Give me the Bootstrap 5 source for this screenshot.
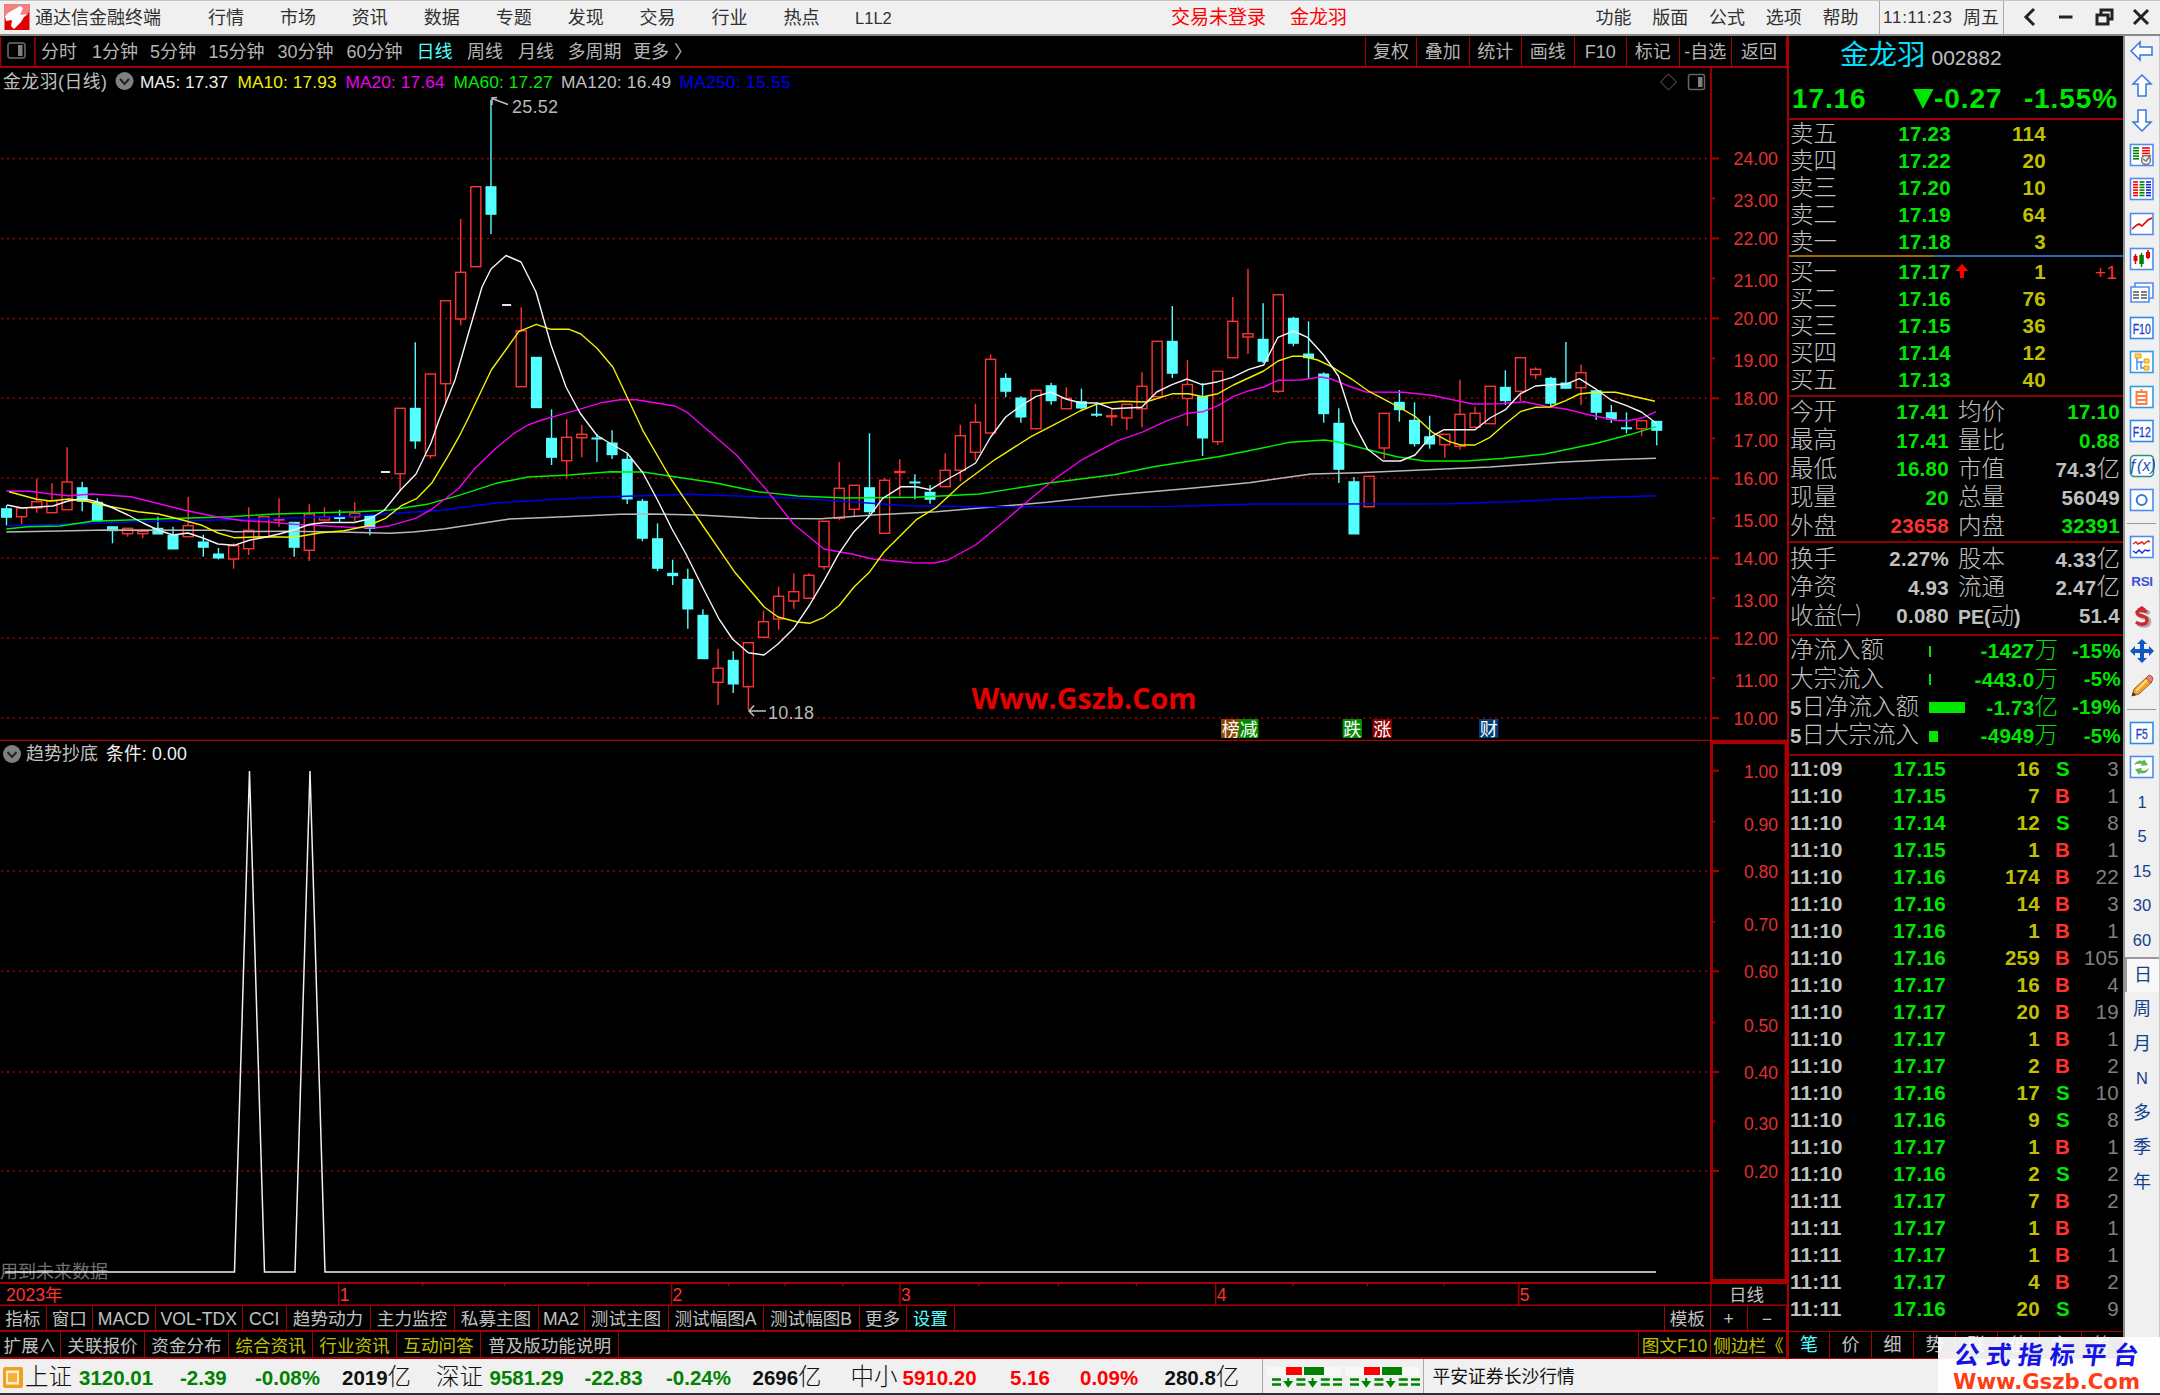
<!DOCTYPE html>
<html lang="zh-CN">
<head>
<meta charset="utf-8">
<meta name="viewport" content="width=device-width, initial-scale=1">
<title>通达信金融终端</title>
<link href="https://cdn.jsdelivr.net/npm/bootstrap@5.3.0/dist/css/bootstrap.min.css" rel="stylesheet">
<style>
:root{--ln:#a80000;--g:#00e600;--y:#c0c000;--r:#ff3232;--w:#c0c0c0;--c:#54ffff}
body{width:2160px;height:1395px;overflow:hidden;background:#000;color:var(--w);font-family:"Liberation Sans","Noto Sans CJK SC",sans-serif;font-size:18px;line-height:1;font-weight:400}
b{font-weight:700}
svg{display:block;flex:none}
svg text{font-family:"Liberation Sans","Noto Sans CJK SC",sans-serif}
.titlebar{height:36px;background:#f0f0f0;color:#303030;border-top:1px solid #c4c4c4;border-bottom:2px solid #8a8a8a}
.menu-cell{width:71.95px;text-align:center}
.menu-cell2{width:56.8px;text-align:center}
.vsep{width:1px;align-self:stretch;background:#a8a8a8}
.leftcol{width:1787px}
.toolrow{height:32px;border-bottom:2px solid var(--ln);color:#b4b4b4;padding-top:1px}
.strip>span,.strip-b>span{flex:none;white-space:nowrap;display:flex;align-items:center;height:100%}
.strip-b>span{border-right:1.5px solid var(--ln);justify-content:center}
.tabrow{height:26px;border-bottom:2px solid var(--ln);font-size:17.6px}
.tabrow2{height:27px;border-bottom:2px solid var(--ln);font-size:17.6px}
.tabrow span,.tabrow2 span{padding-top:4px}
.c-y{color:var(--y)}.c-g{color:var(--g)}.c-r{color:var(--r)}.c-c{color:var(--c)}.c-w{color:var(--w)}.c-d{color:#808080}
.quote{width:336px;border-left:2px solid var(--ln)}
.qhead{height:84px;border-bottom:2px solid var(--ln)}
.qname{color:#00e0ff;font-size:28.5px}
.qbig{font-size:28px;font-weight:700;letter-spacing:.9px;color:var(--g)}
.qr{display:grid;align-items:center;white-space:nowrap;font-size:20.5px;font-weight:700;letter-spacing:.3px;padding-left:1px}
.qr>span{min-width:0;text-align:right}
.qr .lab{text-align:left;overflow:visible}
.k{font-size:23.5px;font-weight:300;letter-spacing:0}
.lv{height:27px;grid-template-columns:86px 75px 95px 71px}
.st{height:28.6px;grid-template-columns:86px 73px 9px 62px 100px}
.fl{height:28.3px;grid-template-columns:139px 38px 91px 63px}
.tk{height:27px;grid-template-columns:86px 70px 94px 38px 41px}
.asks{height:135px;padding-top:1px}
.bids{height:138px;padding-top:2px}
.flowbar{height:11px;background:var(--g)}
.hr-r{border-top:2px solid #900000}
.mid{height:2px;background:linear-gradient(90deg,#a06a00 43.5%,#2a6aa8 43.5%)}
.side{width:37px;background:#f0f0f0;border-left:2px solid #909090;color:#123f8c;box-shadow:inset -1px 0 #c8c8c8;padding-right:1px}
.side-i{height:34.56px;flex:none;display:flex;align-items:center;justify-content:center;font-size:18px}
.side-i.on{background:#f8f8f8;border-left:2px solid #999;border-top:2px solid #999}
.side-l{height:12.5px;flex:none;display:flex;align-items:center}
.side-l::before{content:"";height:1px;width:29px;margin-left:2px;background:#999}
.status{height:36px;background:#f0f0f0;color:#111;border-bottom:2px solid #2b3138;font-size:20.5px;font-weight:700;padding-left:3px}
.status>span{padding-top:4px}
.s-g{color:#008200}.s-r{color:#f00}
.wm{right:0;bottom:2px;width:222px;height:56px;background:rgba(255,255,255,.93)}
</style>
<script src="https://cdn.jsdelivr.net/npm/bootstrap@5.3.0/dist/js/bootstrap.bundle.min.js"></script>
</head>
<body class="d-flex flex-column position-relative">

<header class="titlebar d-flex align-items-center flex-shrink-0">
  <svg width="35" height="32" viewBox="0 0 35 32"><rect x="4.500" y="2" width="25" height="26" fill="#e00000"/><path d="M4.500 2h25v8q-10 8-25 3z" fill="#f28080"/><path d="M20 4 8 11l-3 3 1 5 6-1-1 6 3 3 7-7 3-5 4-3-8 1 3-7z" fill="#fff"/></svg>
  <span style="width:155px">通达信金融终端</span>
  <nav class="d-flex" id="menuL"></nav>
  <span class="s-r ms-auto me-4" style="font-size:19px">交易未登录</span>
  <span class="s-r" style="font-size:19px;width:295px">金龙羽</span>
  <nav class="d-flex" id="menuR"></nav>
  <span class="vsep" style="margin-left:10px"></span>
  <span class="d-flex justify-content-between align-items-center" style="width:119px;padding-left:3px"><span style="font-size:17px;letter-spacing:.75px">11:11:23</span><span>周五</span></span>
  <span class="vsep mx-1"></span>
  <svg width="152" height="32" viewBox="2008 1 152 32" fill="none" stroke="#222" stroke-width="3"><path d="m2034 8-8 8 8 8M2059 16h13.500M2134 9l14 14M2148 9l-14 14"/><path d="M2097 14h11v9h-11zM2101 13V9h11v9h-4"/></svg>
</header>

<div class="d-flex flex-fill" style="min-height:0">
  <main class="leftcol d-flex flex-column flex-shrink-0">
    <div class="toolrow d-flex flex-shrink-0">
      <svg width="37" height="29" viewBox="0 37 37 29"><path d="M35 37v30M.5 37v30" stroke="#a80000" stroke-width="1.500"/><rect x="8" y="43" width="17" height="15" rx="2.500" fill="none" stroke="#555" stroke-width="2"/><rect x="18" y="45" width="4.500" height="11" fill="#808080"/></svg>
      <div class="strip d-flex ps-1" id="periods"></div>
      <div class="strip-b d-flex ms-auto" id="tools"></div>
    </div>
    <svg id="kchart" width="1787" height="673" viewBox="0 68 1787 673"></svg>
    <svg id="ichart" width="1787" height="541" viewBox="0 741 1787 541"></svg>
    <svg id="axis" width="1787" height="24" viewBox="0 1282 1787 24"></svg>
    <div class="tabrow d-flex flex-shrink-0"><div class="strip-b d-flex" id="tabs1"></div><div class="strip-b d-flex ms-auto" id="tabs1r"></div></div>
    <div class="tabrow2 d-flex flex-shrink-0"><div class="strip-b d-flex" id="tabs2"></div><div class="strip-b d-flex ms-auto c-y" id="tabs2r"></div></div>
  </main>

  <section class="quote d-flex flex-column flex-shrink-0">
    <div class="qhead flex-shrink-0">
      <div class="d-flex align-items-center" style="height:38px;padding-left:51px"><span class="qname">金龙羽</span><span class="mt-1" style="font-size:21px;padding-left:6px">002882</span></div>
      <div class="qbig d-flex justify-content-between align-items-center" style="height:44px;padding:6px 5px 0 3px"><span>17.16</span><span class="d-flex align-items-center" style="padding-left:25px"><svg width="21" height="20"><path d="M0 0h20.500L10 20z" fill="#00e600"/></svg>-0.27</span><span>-1.55%</span></div>
    </div>
    <div id="asks" class="asks"></div>
    <div class="mid"></div>
    <div id="bids" class="bids"></div>
    <div class="hr-r" id="st1" style="height:146px;padding-top:1px"></div>
    <div class="hr-r" id="st2" style="height:93px;padding-top:2px"></div>
    <div class="hr-r" id="flow" style="height:120px;padding-top:1px"></div>
    <div class="hr-r" id="ticks" style="height:577px"></div>
    <div class="strip-b d-flex border-top border-bottom flex-shrink-0" id="qtabs" style="height:28px;border-color:#a80000!important"></div>
  </section>

  <aside class="side d-flex flex-column flex-shrink-0" id="side"></aside>
</div>

<footer class="status strip d-flex align-items-center flex-shrink-0" id="status"></footer>

<div class="wm position-absolute">
  <svg width="222" height="56" viewBox="0 0 222 56"><g transform="translate(4 0) skewX(-8)"><text x="15" y="27" font-size="25" font-weight="700" fill="#1414e6" textLength="184">公式指标平台</text></g><text x="15" y="51.500" font-size="21" font-weight="700" fill="#ff3c14" textLength="187" lengthAdjust="spacingAndGlyphs" style="font-family:'DejaVu Sans'">Www.Gszb.Com</text></svg>
</div>

<script>
const $=id=>document.getElementById(id);
const cells=(id,rows)=>{$(id).innerHTML=rows.map(([t,w,c])=>`<span class="${c||''}" style="width:${w}px">${t}</span>`).join('')};

$('menuL').innerHTML=['行情','市场','资讯','数据','专题','发现','交易','行业','热点','<span style="font-size:16.500px">L1L2</span>'].map(t=>`<span class="menu-cell">${t}</span>`).join('');
$('menuR').innerHTML=['功能','版面','公式','选项','帮助'].map(t=>`<span class="menu-cell2">${t}</span>`).join('');

cells('periods',[['分时',51],['1分钟',58],['5分钟',58.500],['15分钟',69],['30分钟',69],['60分钟',70],['日线',50.500,'c-c'],['周线',51],['月线',49.500],['多周期',65.500],['更多 〉',60]]);
cells('tools',[['',5],['复权',51],['叠加',52.500],['统计',52.500],['画线',52.500],['F10',52.500],['标记',52.500],['-自选',52.500],['返回',55]]);
cells('tabs1',[['指标',46.500],['窗口',46.500],['MACD',62.500],['VOL-TDX',87.500],['CCI',43.500],['趋势动力',84],['主力监控',84],['私募主图',84],['MA2',46],['测试主图',84],['测试幅图A',95],['测试幅图B',96],['更多',47],['设置',48.500,'c-c']]);
cells('tabs1r',[['',2],['模板',45.500],['+',37.500],['−',39]]);
cells('tabs2',[['扩展∧',61],['关联报价',84],['资金分布',84],['综合资讯',84,'c-y'],['行业资讯',84,'c-y'],['互动问答',84,'c-y'],['普及版功能说明',138]]);
cells('tabs2r',[['',1],['图文F10',72],['侧边栏《',76]]);
cells('qtabs',[['笔',41,'c-c'],['价',42],['细',42],['势',42],['联',42],['值',42],['主',42],['筹',42]]);

/* order book */
const lv=([l,p,q,a,d])=>`<div class="qr lv"><span class="lab k">${l}</span><span class="c-g">${p}</span><span class="c-y">${a||''}${q}</span><span class="c-r" style="font-weight:400;font-size:19px">${d||''}</span></div>`;
$('asks').innerHTML=[['卖五','17.23',114],['卖四','17.22',20],['卖三','17.20',10],['卖二','17.19',64],['卖一','17.18',3]].map(lv).join('');
const up='<svg class="float-start" width="14" height="15" style="margin:2px 0 0 4px" viewBox="0 0 14 15"><path d="M7 0l6.500 7H9v7H5V7H.5z" fill="#f00"/></svg>';
$('bids').innerHTML=[['买一','17.17',1,up,'+1'],['买二','17.16',76],['买三','17.15',36],['买四','17.14',12],['买五','17.13',40]].map(lv).join('');
const st=([a,b,c,d,e,f])=>`<div class="qr st c-w"><span class="lab k">${a}</span><span class="${c}">${b}</span><i></i><span class="lab k">${d}</span><span class="${f}">${e}</span></div>`;
const yi='<span class="k">亿</span>',wan='<span class="k">万</span>';
$('st1').innerHTML=[['今开','17.41','c-g','均价','17.10','c-g'],['最高','17.41','c-g','量比','0.88','c-g'],['最低','16.80','c-g','市值','74.3'+yi,''],['现量','20','c-g','总量','56049',''],['外盘','23658','c-r','内盘','32391','c-g']].map(st).join('');
$('st2').innerHTML=[['换手','2.27%','','股本','4.33'+yi,''],['净资','4.93','','流通','2.47'+yi,''],['收益㈠','0.080','','<b style="font-size:19.500px">PE(</b>动<b style="font-size:19.500px">)</b>','51.4','']].map(st).join('');
$('flow').innerHTML=[['净流入额',2,'-1427'+wan,'-15%'],['大宗流入',2,'-443.0'+wan,'-5%'],['<b style="font-size:20.500px">5</b>日净流入额',36,'-1.73'+yi,'-19%'],['<b style="font-size:20.500px">5</b>日大宗流入',9,'-4949'+wan,'-5%']].map(([a,w,b,c])=>`<div class="qr fl c-g"><span class="lab k c-w">${a}</span><div class="flowbar" style="width:${w}px"></div><span>${b}</span><span>${c}</span></div>`).join('');
const T=`09 15 16 S 3|10 15 7 B 1|10 14 12 S 8|10 15 1 B 1|10 16 174 B 22|10 16 14 B 3|10 16 1 B 1|10 16 259 B 105|10 17 16 B 4|10 17 20 B 19|10 17 1 B 1|10 17 2 B 2|10 16 17 S 10|10 16 9 S 8|10 17 1 B 1|10 16 2 S 2|11 17 7 B 2|11 17 1 B 1|11 17 1 B 1|11 17 4 B 2|11 16 20 S 9`;
$('ticks').innerHTML=T.split('|').map(r=>{const[m,p,q,s,n]=r.split(' ');return `<div class="qr tk"><span class="lab c-w">11:${m}</span><span class="c-g">17.${p}</span><span class="c-y">${q}</span><span class="pe-2 ${s=='S'?'c-g':'c-r'}">${s}</span><span class="c-d" style="font-weight:400">${n}</span></div>`}).join('');

/* status bar */
const sk=t=>`<span class="k">${t}</span>`;
cells('status',[['<svg width="20" height="22" viewBox="0 0 20 22"><rect width="20" height="21" rx="2" fill="#f0a020"/><rect x="3" y="3.500" width="13" height="14" fill="#fff0c0"/><rect x="5" y="6" width="9" height="9" fill="#f5b040"/></svg>',22],
[sk('上证'),54],['3120.01',101,'s-g'],['-2.39',75,'s-g'],['-0.08%',87,'s-g'],['2019'+yi,94],[sk('深证'),53.500],['9581.29',95,'s-g'],['-22.83',81.500,'s-g'],['-0.24%',86.500,'s-g'],['2696'+yi,98],[sk('中小'),52],['5910.20',107.500,'s-r'],['5.16',70,'s-r'],['0.09%',84.500,'s-r'],['280.8'+yi,97]]);
const meter=x=>`<rect x="${x}" y="5" width="74" height="9" fill="#f8f8f8"/><rect x="${x+19}" y="5" width="16" height="8" fill="#f00"/><rect x="${x+37}" y="5" width="20" height="8" fill="#008200"/>`+[0,1,2,3,4,5].map(i=>{const a=x+5+i*12.2;return i==1||i==3?`<path d="M${a+4} 16v7M${a+1} 20l3 4 3-4z" stroke="#008200" stroke-width="2" fill="#008200"/>`:`<path d="M${a} 17.500h9M${a} 22.500h9" stroke="#008200" stroke-width="2.500"/>`}).join('');
$('status').insertAdjacentHTML('beforeend',`<i class="vsep"></i><svg width="160" height="30" viewBox="0 -1 160 30">${meter(4)}${meter(82)}</svg><i class="vsep"></i><span style="font-size:17.800px;font-weight:400;padding-left:9px">平安证券长沙行情</span>`);

/* sidebar */
const box=(c,s='#4f8cf0')=>`<svg width="26" height="24" viewBox="0 0 26 24"><rect x="1.500" y="1.500" width="22.500" height="21" fill="#fff" stroke="${s}" stroke-width="1.600"/>${c}</svg>`;
const bt=t=>box(`<text x="12.700" y="17.500" font-size="14" text-anchor="middle" fill="#2040c8" stroke="#2040c8" stroke-width=".3" textLength="${t.length*6}" lengthAdjust="spacingAndGlyphs">${t}</text>`,'#2f8ce8');
const arr=a=>`<svg width="26" height="26" viewBox="-13 -13 26 26"><path transform="rotate(${a})" d="M-11 0-2-9v5h12v8H-2v5z" fill="#fff" stroke="#3b74dc" stroke-width="1.500"/></svg>`;
const bars=(x,c,n=6,w=5)=>Array.from({length:n},(_,i)=>`<path d="M${x} ${5+i*2.7}h${w}" stroke="${c}" stroke-width="1.600"/>`).join('');
const icons=[arr(0),arr(90),arr(-90),
box(bars(4,'#008000',5,6)+bars(13,'#f00',4,8)+'<circle cx="17" cy="17" r="4.500" fill="#eee" stroke="#777" stroke-width="1.500"/><path d="m14 16 3 2 5-6" fill="none" stroke="#777" stroke-width="1.500"/>'),
box(bars(4,'#f00')+bars(10.5,'#008000')+bars(17,'#22d')),
box('<path d="m3 17 5-4 2-1 3 2 6-6 4-2" fill="none" stroke="#e00000" stroke-width="1.600"/>'),
box('<path d="M6.500 7v10M19 3v9" stroke="#e00000" stroke-width="1.500"/><path d="M4.500 9h4v5h-4zM17 5h4v6h-4z" fill="#e00000"/><path d="M12.500 6v14" stroke="#008000" stroke-width="1.500"/><path d="M10.300 8h4.500v9h-4.500z" fill="#008000"/>'),
'<svg width="26" height="24" viewBox="0 0 26 24" fill="#fff" stroke="#4f8cf0" stroke-width="1.600"><path d="M6 2h18v15H6z"/><path d="M2 6h18v15H2z"/><path d="M4 11h6M12 11h6M4 14h6M12 14h6M4 17h6M12 17h6" stroke="#555" stroke-width="1.400"/></svg>',
bt('F10'),
box('<path d="M8 7v13M8 12h6M12 12v6h3" fill="none" stroke="#4f8cf0" stroke-width="1.500"/><path d="M6 4h6v4H6zM15 9h5v4h-5zM15 16h5v4h-5z" fill="#ffd060" stroke="#f0a000"/>','#2f9ce8'),
box('<path d="M12.500 4v3M7.500 7h10v12h-10zM7.500 11h10M7.500 15h10" fill="none" stroke="#ff7f3f" stroke-width="2"/>','#2f9ce8'),
bt('F12'),
'<svg width="26" height="24" viewBox="0 0 26 24"><rect x="1.500" y="1.500" width="23" height="21" rx="4" fill="#fff" stroke="#28908c" stroke-width="1.600"/><text x="13" y="17" font-size="16" font-style="italic" text-anchor="middle" fill="#1c50c0">ƒ(x)</text></svg>',
box('<circle cx="12.700" cy="12" r="5" fill="none" stroke="#2f7ce0" stroke-width="2"/>'),
0,
box('<path d="m4 9 3-2 2 2 4-2 2 2 4-3 2 1" fill="none" stroke="#e02020" stroke-width="1.500"/><path d="m4 16 3 2 3-3 3 3 3-3 3 1 2-1" fill="none" stroke="#2030e0" stroke-width="1.500"/>'),
'<b style="font-size:13.500px;color:#3a50d8;letter-spacing:-.3px">RSI</b>',
'<svg width="26" height="26" viewBox="0 0 26 26"><path d="M19 8q-7-5-10 0 0 4 6 4 6 2 3 7-5 3-11-1" fill="none" stroke="#aaa" stroke-width="4" transform="translate(1.500 1.500)"/><path d="M18 8q-7-4-10 0 0 4 6 4 6 2 3 7-5 3-10-1" fill="none" stroke="#d02828" stroke-width="3.400"/><path d="m8 5 5-3 4 3z" fill="#d02828"/></svg>',
'<svg width="26" height="26" viewBox="-13 -13 26 26" fill="#1058c0"><g id="ar"><path d="M0-12 5-7H-5z"/><path d="M-2-8h4v6h-4z"/></g><use href="#ar" transform="rotate(90)"/><use href="#ar" transform="rotate(180)"/><use href="#ar" transform="rotate(270)"/><circle r="3"/></svg>',
'<svg width="26" height="26" viewBox="0 0 26 26"><path d="M3 23l2-7L18 4l5 5L10 21z" fill="#f0a030" stroke="#9a6420"/><path d="m7 18 11-11" stroke="#ffe070" stroke-width="2"/><path d="m17 5 3-3q4 1 4 4l-2 4z" fill="#e88080" stroke="#a05050"/><path d="m3 23 1-4 3 3z" fill="#333"/></svg>',
0,bt('F5'),
box('<path d="M5 10q3-6 9-4l1-2 4 6-7 1 1-2q-4-1-8 1zM20 13q-2 7-9 5l-1 2-4-6 7-1-1 2q4 2 8-2z" fill="#5cb85c"/>')];
$('side').innerHTML=icons.map(i=>i?`<div class="side-i">${i}</div>`:'<div class="side-l"></div>').join('')+['1','5','15','30','60','日','周','月','N','多','季','年'].map(t=>`<div class="side-i ${t=='日'?'on':''}" style="font-size:${/[\dN]/.test(t)?16.5:18}px">${t}</div>`).join('');
$('side').firstChild.style.marginTop='-2px';

/* candles: u|d, body top, body bottom, high, low */
const K=`d508.7,517.3,505,525.7 u508,516.7,508,524 u501.7,508,478.7,512.7 u500.7,512.7,483.3,512.7 u482,509.7,447.3,509.7 d487.7,501.3,481.7,511.3 d502.3,520.7,498.3,520.7 d526.7,530.7,526.7,543.3 u528.3,533.7,528.3,536.7 u531.3,533.7,531.3,538 d528.3,534,516.7,534 d535.3,549,526.7,549 u525.7,536.7,496.7,536.7 d542,547.3,534.7,556.7 d554,558,548,559.3 u545.7,559,543.3,568.7 u530.3,548.7,507.3,555 u516.7,537.3,516.7,537.3 u519,520,498.3,526.7 d522.3,547.3,522.3,556.7 u514,550.3,504.3,561 u517,520,507.3,520 d517.5,518.5,510,522.7 u513.3,516.7,502.3,520.7 d515.7,528.3,515.7,535.3 x472 u408.3,473.7,408.3,490.7 d408.3,441,342.3,448.7 u374,455.7,374,458.7 u300.7,383.7,300.7,405 u272.3,319,219,325.3 u186.7,266.7,186.7,266.7 d186.7,214.3,100,234 x305 u330.7,386.7,307.3,386.7 d357.3,407.7,357.3,407.7 d438.3,457.3,409.3,465 u437.3,460.7,419,478 u434.3,437.7,424.7,457.3 d438,439,434,462 d443,454.7,430.3,459 d459.3,499,453.7,504 d501.3,538.3,499,541.3 d538.7,568.3,523.3,571.3 d573.3,575.7,559.7,585 d579.3,609,568.7,628.7 d615.3,658.7,609.3,658.7 u668.3,682.3,648.7,705 d660.3,684,651.3,693 u642.7,686.7,642.7,710 u621.7,637.3,610.7,637.3 u596.3,619,586.7,629.7 u591.7,601,573.3,608.7 u575.3,598.3,573.3,598.3 u521.3,566.7,521.3,569.7 u488.3,518.3,462,520.3 u485.3,509.3,485.3,516.7 d487.7,511.7,433.3,514 u480.3,533.3,478,533.3 u471.5,472.5,459.3,496.7 d482,483,474.3,499.3 d492.3,499.3,485,503.7 u470.3,486.7,453.3,486.7 u435.7,470.3,424.7,481.3 u422.3,452.3,403.7,460.3 u359.3,433,354.3,433 d378.3,391.3,373.3,397.3 d398,417,396.3,422.7 u390.3,428.7,390.3,428.7 d385.7,400.7,382.7,404.7 u398.3,408.7,387.3,408.7 d401.7,408,388.7,409.3 d414.2,415.2,403.3,417 u415.8,416.8,409,426 u404.3,418,404.3,430 u386.3,408.7,372.3,427.3 u341.3,396.7,341.3,396.7 d341.3,373.3,306,378 u384.5,398.5,360,426 d396.7,438,383,456 u371.3,441.7,371.3,445 u321.3,357.7,297,357.7 u333.7,337,268.7,354 d339.3,361.3,303.3,363.3 u294.7,391.3,294.7,393 d318.3,343.3,316.7,346.3 d354,357.7,321.3,378.7 d374,413.7,372.3,422.7 d423.3,469.3,408.3,483 d481.7,534,477,534 u476.3,506.7,476.3,506.7 u413.3,448,413.3,459 d402.3,409.7,390,421.7 d420.3,443.7,402.3,446.7 d436.7,444,415.7,448.7 u434.3,444.7,434.3,457.7 u414.3,446.3,379.7,449.7 u413.3,427.3,406.7,427.3 u386.3,423.7,386.3,423.7 d387.3,400.7,370.3,405 u357.7,391.3,357.7,401 u369.3,374.7,367.3,379.3 d378.3,403.3,376.7,407.3 d383,388.3,342,388.3 u372.7,387.7,364.7,405 d390.7,412.3,390.7,420 d412.7,419,405,423 d427.8,428.8,412.3,433.3 u420.7,428.7,420.7,436.3 d421.3,430.3,421.3,445.3`;
let s='';
const dots=y=>`<path d="M1 ${y}H1708" stroke="#a00000" stroke-width="1.500" stroke-dasharray="2 4"/>`;
const txt=(x,y,t,c,e='')=>`<text x="${x}" y="${y}" fill="${c}" ${e}>${t}</text>`;
const red='#a80000';
for(let p=24;p>=10;p--){const y=158.5+(24-p)*39.97;const ev=p%2==0;if(ev)s+=dots(y);
  s+=`<path d="M1711 ${y}h${ev?8:4}" stroke="${red}" stroke-width="2"/>`+txt(1778,y+6.8+(ev?0:2),p+'.00','#e03030','font-size="17.800" text-anchor="end"');}
K.split(' ').forEach((k,i)=>{const x=6.5+15.14*i;
  if(k[0]=='x'){s+=`<path d="M${x-4} ${k.slice(1)}h9" stroke="#e8e8e8" stroke-width="2"/>`;return}
  const[a,b,h,l]=k.slice(1).split(',').map(Number);
  if(k[0]=='d')s+=`<path d="M${x} ${h}V${l}" stroke="#54ffff" stroke-width="1.400"/><rect x="${x-5.5}" y="${a-.5}" width="11" height="${b-a+1}" fill="#54ffff"/>`;
  else{s+=`<path d="M${x} ${h}V${a}M${x} ${b}V${l}" stroke="#ff3232" stroke-width="1.400"/><rect x="${x-5}" y="${a}" width="10" height="${b-a}" fill="none" stroke="#ff3232" stroke-width="1.400"/>`}});
const line=(c,p)=>{s+=`<polyline points="${p}" fill="none" stroke="${c}" stroke-width="1.400" stroke-linejoin="round"/>`};
line('#b8b8b8','6.4,532 60,531 105.6,530 225,530.3 234,531.7 284.7,531.3 340,532 390,533.3 413,532 445,528.7 509.6,519 564.7,516.7 620,514.3 650,514 698.9,515 758,518.3 821,518.7 876.8,514.7 936,511.7 995.4,506.7 1047,502.3 1114,495 1193.8,488 1249,482.7 1311,474 1359,472.7 1421,470 1490,467 1558.8,462.3 1610,459.7 1656,458.3');
line('#0000f0','6.4,525.7 73.5,524 137.7,521.7 216,520 294,518 353.5,516 399.5,513 440.8,510.3 496,503 555.6,499.3 610.7,496.7 688.7,494.3 738,496 797.7,498.3 857,502.3 908,505.7 995.4,506.7 1177,506.3 1255.8,504 1448.6,503.7 1510.6,501.7 1586,498 1656,495.7');
line('#00f000','6.4,529 27.5,526.7 60,526 92,521.3 165,518.7 230,516.7 275,514 358,511.7 390,510 427,504.3 459,495.3 496,483.3 528,477 569,475 610.7,471.7 643,472 671,476.3 714.7,482.7 758,491.7 797.7,496 845,498 916,497.3 979.6,494 1047,483.3 1114,474.7 1153.6,466.7 1218,456.7 1249,450.7 1290,442.3 1324.6,440 1338,442 1369.4,450 1397,456.7 1424.5,461 1466,461 1504,458.3 1545,454 1596.7,443.3 1631,434.3 1656,426.7');
line('#f000f0','6.4,491 30,491.3 50.5,494 69,495.7 92,494 131,496.7 156,503 183.7,510 216,516.7 243,520.7 266,521.7 294,524.3 349,527.3 376.5,527.7 390,525.7 415.5,518.3 431.6,509.3 459,488.3 475,468.3 496,448.3 514,433.3 528,425 541.8,420 578.5,409.7 601.5,402.7 620,399.7 636,399.7 675,406 687,412.3 736.4,455 766,489.3 793.8,524.3 824,549 853,554.3 872.8,559 912.4,562.7 934,563 948,560 975.6,545 1007.3,518.7 1027,501.7 1054.7,479 1080.4,460.7 1118,440.7 1141.7,432.3 1165.4,421.3 1187,413.3 1203,411.7 1218,405.7 1233,396.7 1249,390.7 1263.7,387 1278,380.3 1300.5,380 1321,377 1331.5,379 1348.7,386 1366,392 1403.8,392.3 1431.4,395.3 1472.7,404 1500,403.7 1524.4,401.7 1548.5,406.7 1565.7,409 1586.3,414.3 1615.6,420.3 1627.7,420.7 1643,417.7 1656,411.7');
line('#f0f000','9,491.7 36.7,499.3 50.5,501 69,499 87,501.3 101,504.7 137.7,511.7 158.4,514 183.7,520.3 202,525.3 218,533 234,537.7 266,536.7 294,537.3 321,532.7 344,530.7 367,526 385,518.7 402,505.3 417,498.3 431.6,483.3 447.7,456.7 459,436.7 467.4,420 491.3,370 518.8,331.7 536.3,324.3 551,329.3 569.3,329.3 580.8,334 597,348.3 613,367.3 627.7,398.3 643.5,431.7 671,479 698.9,520 734.4,571.7 764,606.7 778,617 797.7,622 809.6,623.3 824,617.3 839,605.7 854,587 869.3,572.3 884,552 916.3,519.7 936,507.7 960.6,485 995.4,459.3 1031,436.7 1054.7,424.3 1080,411 1098,403.7 1122,401.3 1145.7,402 1173,393.7 1189,393.7 1203,396.7 1218,393.7 1233.4,385 1263.7,371 1278,361 1292,356.3 1302,356.3 1317.7,360 1331.5,366.7 1352,379.3 1369.4,391.7 1386.6,400.7 1400.4,408 1415,416.3 1432.4,432.3 1448.6,441.3 1460.6,445 1475,445 1490,437.3 1505.4,423.7 1521,411.3 1535.4,407.3 1550,407 1565.7,400.7 1579.4,394 1595,392.3 1615.6,392.3 1655,401.3');
line('#f4f4f4','7,505 22,508 53,506 68,501 83,498.5 98,502 113,508 128,515 143,523 158,530 173,535 188,533 203,538 218,544 234,545.3 250,540 264,537.5 279,534 294,530 309,524.5 324,522.5 354,522.5 369,519 384,510.5 401,489.5 416,474 431,443 439,420 455,380 470,328 482,287 491,269 506,255.5 521,262 536,292 551,345 566,387 580,413 597,435.5 613,445 627,453 643,473 658,501 672,529 686,554 702,586 718.6,618.3 732.5,639 748.3,652.7 764,655 778,644 793.8,628.3 809.6,605 824,580.7 838.4,554.3 853.5,532.3 869.3,516.3 882.7,498.3 901.3,486.7 916.3,486.7 930.2,489.7 946,480 960.6,472 975.6,463 990.7,437 1005.7,417 1020.7,406 1035.7,396.7 1050.8,392 1066.6,399.3 1080.4,402.7 1097.4,403 1112,408.7 1141.7,407.3 1156.7,392 1172,384.7 1187,379 1202,384.7 1217.9,381.7 1232.3,377.3 1248.9,369.3 1263.7,365 1278,337.3 1293.6,331 1308,337.7 1323.6,355 1338.4,376 1352.9,421.7 1367.7,449.3 1383,461 1400.4,461 1415,455 1429.7,437.7 1444,429.7 1475,429.7 1490,418 1505.4,409.7 1520,394 1535.4,386 1550,384.7 1565.7,384.3 1579.4,378.7 1596.7,389.7 1611,400 1626.6,405.7 1641.4,412 1656,423');
const tl=(w)=>`font-size="17.300" textLength="${w}"`;
const chev=(x,y)=>`<circle cx="${x}" cy="${y}" r="9" fill="#808080"/><path d="m${x-4.5} ${y-2} 4.500 5 4.500-5" fill="none" stroke="#222" stroke-width="2"/>`;
s+=txt(3,87.5,'金龙羽(日线)','#c0c0c0','font-size="17.800" textLength="104"')+chev(124.5,81)
 +txt(140,87.5,'MA5: 17.37','#f0f0f0',tl(88))+txt(237.5,87.5,'MA10: 17.93','#f0f000',tl(99))+txt(345.5,87.5,'MA20: 17.64','#f000f0',tl(99))+txt(453.5,87.5,'MA60: 17.27','#00f000',tl(99))+txt(561,87.5,'MA120: 16.49','#c0c0c0',tl(110))+txt(679.5,87.5,'MA250: 15.55','#0000f0',tl(111));
s+=`<path d="M1668.500 74l8 8-8 8-8-8z" fill="none" stroke="#666"/><rect x="1688.500" y="74.500" width="16" height="15" rx="2" fill="none" stroke="#666" stroke-width="1.500"/><rect x="1698" y="77" width="4.500" height="10" fill="#808080"/>`;
s+=`<path d="M508 104.500 492 98.500M492 105v-7l5-.5" fill="none" stroke="#c0c0c0" stroke-width="1.500"/>`+txt(512,112.5,'25.52','#b8b8b8','font-size="18" textLength="46"');
s+=`<path d="M766 711h-17M754 705.500l-5 5.500 5 5" fill="none" stroke="#c0c0c0" stroke-width="1.500"/>`+txt(768,719,'10.18','#b8b8b8','font-size="18" textLength="46"');
s+=`<text x="971.500" y="709" font-size="28" font-weight="700" fill="#e60000" textLength="225" lengthAdjust="spacingAndGlyphs" style="font-family:'Open Sans','Noto Sans'">Www.Gszb.Com</text>`;
[['榜',1221,'#8a4600'],['减',1239,'#008a00'],['跌',1342.5,'#008a00'],['涨',1372.5,'#8a0000'],['财',1479,'#003c78']].forEach(([t,x,c])=>{s+=`<rect x="${x}" y="719" width="19.500" height="19" fill="${c}"/>`+txt(x+.8,735.5,t,'#fff','font-size="18"')});
s+=`<path d="M1711 68v673" stroke="${red}" stroke-width="1.800"/><path d="M0 740.500h1787" stroke="${red}" stroke-width="1.500"/>`;
$('kchart').innerHTML=s;

/* indicator pane */
s=chev(12,754)+txt(26,760,'趋势抄底','#c0c0c0','font-size="18"')+txt(106,760,'条件: 0.00','#f0f0f0','font-size="17.800" textLength="81"');
[770.7,821.5,871,921.9,971.3,1022.5,1072,1121.4,1170.9].forEach((y,i)=>{const ev=i%2==0;if(ev&&i)s+=dots(y);
 s+=`<path d="M1712 ${y}h${ev?7:3}" stroke="${red}" stroke-width="2"/>`+txt(1778,y+7+(ev?0:2),(1-i/10).toFixed(2),'#e03030','font-size="17.500" text-anchor="end"')});
s+=txt(0,1278,'用到未来数据','#707070','font-size="18" textLength="108"');
s+=`<polyline points="5,1272 234.500,1272 249.500,771 264.500,1272 295,1272 310,771 325,1272 1656,1272" fill="none" stroke="#f0f0f0" stroke-width="1.500"/>`;
s+=`<path d="M1711.500 742.500h74.500v538h-74.500z" fill="none" stroke="${red}" stroke-width="3"/>`;
$('ichart').innerHTML=s;

/* time axis */
s=`<path d="M0 1283h1787M0 1305.300h1787" stroke="${red}" stroke-width="1.800"/>`+txt(6,1301,'2023年','#ff3232','font-size="17.500"');
[[338.7,1],[671.6,2],[900,3],[1215.7,4],[1518.8,5],[1711,'']].forEach(([x,t])=>{s+=`<path d="M${x} 1283v23" stroke="${red}" stroke-width="1.400"/>`+txt(x+1,1301,t,'#ff3232','font-size="17.500"')});
[422.5,504.6,588.4,728.5,785.3,842.7,978.6,1058.4,1136.5,1292.7,1367.3,1444.2].forEach(x=>{s+=`<path d="M${x} 1283v3" stroke="${red}" stroke-width="1.400"/>`});
s+=txt(1729,1301,'日线','#c0c0c0','font-size="17.500"');
$('axis').innerHTML=s;
</script>
</body>
</html>
